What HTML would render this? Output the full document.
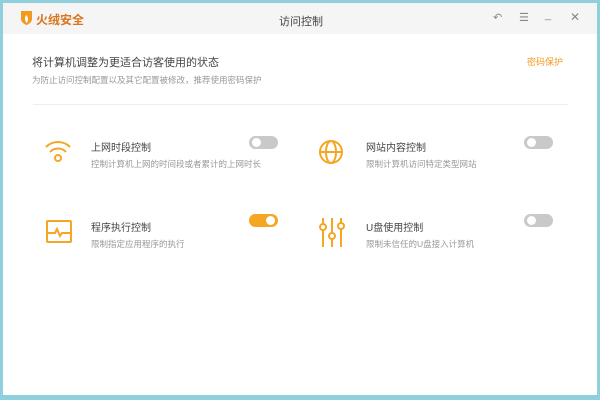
<!DOCTYPE html>
<html><head><meta charset="utf-8"><style>
*{margin:0;padding:0;box-sizing:border-box}
body{width:600px;height:400px;background:#8fd0dc;position:relative;overflow:hidden;font-family:"Liberation Sans","Noto Sans CJK SC",sans-serif}
.win{position:absolute;left:3px;top:3px;width:594px;height:392px;background:#fff}
.tb{position:absolute;left:0;top:0;width:594px;height:31px;background:#f5f5f5}
.a{position:absolute;white-space:nowrap}
.tg{position:absolute;width:29px;height:13px;border-radius:7px;background:#c9c9c9}
.tg::after{content:"";position:absolute;top:2px;width:9px;height:9px;border-radius:50%;background:#fff}
.off::after{left:3px}
.on{background:#f5a623}.on::after{right:3px}
.t{font-size:10px;color:#444}
.d{font-size:8.5px;color:#999}
</style></head><body>
<div class="win">
<div class="tb">
<svg class="a" style="left:17px;top:7px" width="13" height="16" viewBox="0 0 13 16"><path d="M1 1h11v8c0 3-3 5-5.5 6C4 14 1 12 1 9z" fill="#f39a1e"/><path d="M6.5 5c-2 2-2 5 0 8 2-2 2-5 0-8z" fill="#fff"/></svg>
<div class="a" style="left:33px;top:8px;font-size:12px;color:#d9761e;font-weight:bold">火绒安全</div>
<div class="a" style="left:276px;top:10px;font-size:11px;color:#444">访问控制</div>
<div class="a" style="left:490px;top:8px;font-size:11px;color:#888">↶</div>
<div class="a" style="left:516px;top:8px;font-size:11px;color:#888">☰</div>
<div class="a" style="left:542px;top:6px;font-size:11px;color:#888">_</div>
<div class="a" style="left:567px;top:7px;font-size:12px;color:#888">✕</div>
</div>
<div class="a" style="left:29px;top:51px;font-size:11px;color:#444">将计算机调整为更适合访客使用的状态</div>
<div class="a" style="left:29px;top:71px;font-size:8.5px;color:#999">为防止访问控制配置以及其它配置被修改，推荐使用密码保护</div>
<div class="a" style="left:524px;top:52px;font-size:9px;color:#f39a1e">密码保护</div>
<div class="a" style="left:30px;top:101px;width:535px;height:1px;background:#eee"></div>

<svg class="a" style="left:41px;top:134px" width="28" height="28" viewBox="0 0 28 28" fill="none" stroke="#f5a623" stroke-width="2"><path d="M2 10a17 17 0 0 1 24 0M6 15a11 11 0 0 1 16 0"/><circle cx="14" cy="21" r="3"/></svg>
<div class="a t" style="left:88px;top:136px">上网时段控制</div>
<div class="a d" style="left:88px;top:155px">控制计算机上网的时间段或者累计的上网时长</div>
<div class="tg off" style="left:246px;top:133px"></div>

<svg class="a" style="left:315px;top:136px" width="26" height="26" viewBox="0 0 26 26" fill="none" stroke="#f5a623" stroke-width="2"><circle cx="13" cy="13" r="11"/><ellipse cx="13" cy="13" rx="5" ry="11"/><path d="M2 13h22"/></svg>
<div class="a t" style="left:363px;top:136px">网站内容控制</div>
<div class="a d" style="left:363px;top:155px">限制计算机访问特定类型网站</div>
<div class="tg off" style="left:521px;top:133px"></div>

<svg class="a" style="left:43px;top:217px" width="26" height="24" viewBox="0 0 26 24" fill="none" stroke="#f5a623" stroke-width="2"><rect x="1" y="1" width="24" height="21" rx="1"/><path d="M1 13h8l2-4 3 7 2-3h9"/></svg>
<div class="a t" style="left:88px;top:216px">程序执行控制</div>
<div class="a d" style="left:88px;top:235px">限制指定应用程序的执行</div>
<div class="tg on" style="left:246px;top:211px"></div>

<svg class="a" style="left:316px;top:214px" width="26" height="30" viewBox="0 0 26 30" fill="none" stroke="#f5a623" stroke-width="2"><path d="M4 1v29M13 1v29M22 1v29"/><circle cx="4" cy="10" r="3" fill="#fff"/><circle cx="13" cy="19" r="3" fill="#fff"/><circle cx="22" cy="9" r="3" fill="#fff"/></svg>
<div class="a t" style="left:363px;top:216px">U盘使用控制</div>
<div class="a d" style="left:363px;top:235px">限制未信任的U盘接入计算机</div>
<div class="tg off" style="left:521px;top:211px"></div>
</div>
</body></html>
